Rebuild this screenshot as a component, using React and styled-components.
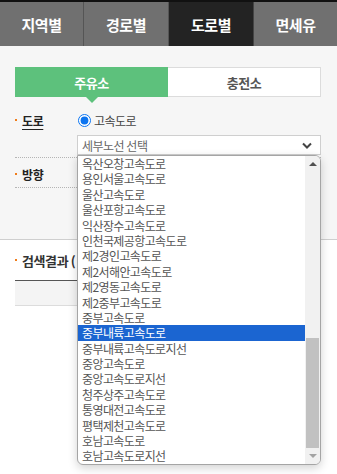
import React from "react";
import styled, { createGlobalStyle } from "styled-components";

const GlobalStyle = createGlobalStyle`
  body {
    margin: 0;
    background: #ffffff;
    font-family: "Noto Sans CJK KR", "Noto Sans", sans-serif;
  }
`;

const Page = styled.div`
  position: relative;
  width: 337px;
  height: 474px;
  overflow: hidden;
  background: #ffffff;
`;

const TabBar = styled.nav`
  display: grid;
  grid-template-columns: 84px 85px 85px 83px;
  height: 44px;
  border-top: 2px solid #111;
  background-color: #707070;
`;

const Tab = styled.div`
  display: flex;
  align-items: center;
  justify-content: center;
  color: #fff;
  font-size: 15px;
  font-weight: bold;
  letter-spacing: -0.5px;
  background-color: ${(p) => (p.active ? "#232323" : "#707070")};
  border-right: 1px solid ${(p) => (p.active ? "#444" : "#555")};
  &:last-child {
    border-right: none;
  }
`;

const Search = styled.section`
  background-color: #f6f6f6;
  padding: 21px 16px 15px 15px;
  border-bottom: 1px solid #cfcfcf;
`;

const SubTabs = styled.div`
  display: grid;
  grid-template-columns: 1fr 1fr;
  height: 30px;
`;

const SubTab = styled.div`
  position: relative;
  display: flex;
  align-items: center;
  justify-content: center;
  font-size: 13px;
  font-weight: bold;
  letter-spacing: -0.5px;
  color: ${(p) => (p.active ? "#fff" : "#555")};
  background-color: ${(p) => (p.active ? "#5dc17c" : "#fff")};
  border: 1px solid ${(p) => (p.active ? "#5dc17c" : "#dcdcdc")};
  border-left: ${(p) => (p.active ? "" : "none")};
  ${(p) =>
    p.active &&
    `&::after {
      content: "";
      position: absolute;
      left: 50%;
      bottom: -7px;
      margin-left: -6px;
      border-left: 6px solid transparent;
      border-right: 6px solid transparent;
      border-top: 6px solid #5dc17c;
    }`}
`;

const Field = styled.div`
  display: flex;
  padding: ${(p) => p.pad};
  border-bottom: 1px dotted #b5b5b5;
`;

const Label = styled.div`
  width: 62px;
  flex-shrink: 0;
  display: flex;
  align-items: center;
  gap: 5px;
  height: 18px;
  margin-top: ${(p) => p.top || "0"};
  font-size: 12px;
  font-weight: bold;
  color: #222;
  letter-spacing: -0.4px;
  &::before {
    content: "";
    width: 2px;
    height: 2px;
    background-color: #f07c1a;
  }
  span {
    text-decoration: ${(p) => (p.underline ? "underline" : "none")};
    text-underline-offset: 3px;
  }
`;

const Controls = styled.div`
  flex: 1;
  display: flex;
  flex-direction: column;
  gap: 6px;
`;

const RadioLine = styled.label`
  display: flex;
  align-items: center;
  gap: 3px;
  height: 18px;
  font-size: 12px;
  color: #444;
  letter-spacing: -0.5px;
  input {
    margin: 0 0 0 1px;
    width: 13px;
    height: 13px;
    accent-color: #0b74f0;
  }
`;

const SelectBox = styled.div`
  display: flex;
  align-items: center;
  justify-content: space-between;
  height: 20px;
  box-sizing: border-box;
  padding: 0 8px 0 4px;
  background-color: #fff;
  border: 1px solid #cfcfcf;
  font-size: 12px;
  color: #666;
  letter-spacing: -0.5px;
`;

const ButtonRow = styled.div`
  display: flex;
  justify-content: flex-end;
  margin-top: 10px;
`;

const SearchButton = styled.div`
  width: 80px;
  height: 26px;
  background-color: #3f9e5c;
`;

const Result = styled.section`
  padding: 0 16px 0 15px;
`;

const ResultTitle = styled.div`
  display: flex;
  align-items: center;
  height: 40px;
  font-size: 13px;
  font-weight: bold;
  color: #333;
  letter-spacing: -0.4px;
  gap: 5px;
  &::before {
    content: "";
    width: 2px;
    height: 2px;
    background-color: #f07c1a;
  }
`;

const TableHead = styled.div`
  height: 24px;
  background-color: #f4f4f4;
  border-top: 1px solid #555;
  border-bottom: 1px solid #dcdcdc;
`;

const Dropdown = styled.div`
  position: absolute;
  left: 77px;
  top: 155px;
  width: 244px;
  height: 310px;
  box-sizing: border-box;
  display: flex;
  background-color: #fff;
  border: 1px solid #a5a5a5;
  border-radius: 0 6px 6px 6px;
  box-shadow: 0 3px 10px rgba(0, 0, 0, 0.18);
  overflow: hidden;
`;

const List = styled.ul`
  flex: 1;
  margin: 0;
  padding: 0;
  list-style: none;
`;

const Item = styled.li`
  height: 15.4px;
  line-height: 15.4px;
  padding-left: 4px;
  font-size: 12px;
  letter-spacing: -0.6px;
  white-space: nowrap;
  color: ${(p) => (p.selected ? "#fff" : "#555")};
  background-color: ${(p) => (p.selected ? "#1b65d1" : "transparent")};
`;

const ScrollBar = styled.div`
  width: 15px;
  display: flex;
  flex-direction: column;
  align-items: center;
  background-color: #f1f1f1;
`;

const Arrow = styled.div`
  width: 0;
  height: 0;
  margin: 6px 0;
  border-left: 4px solid transparent;
  border-right: 4px solid transparent;
  ${(p) =>
    p.down
      ? `border-top: 4px solid #a3a3a3;`
      : `border-bottom: 4px solid #505050;`}
`;

const Track = styled.div`
  flex: 1;
  width: 13px;
  display: flex;
  flex-direction: column;
  justify-content: flex-end;
`;

const Thumb = styled.div`
  height: 110px;
  background-color: #c1c1c1;
`;

const roads = [
  "옥산오창고속도로",
  "용인서울고속도로",
  "울산고속도로",
  "울산포항고속도로",
  "익산장수고속도로",
  "인천국제공항고속도로",
  "제2경인고속도로",
  "제2서해안고속도로",
  "제2영동고속도로",
  "제2중부고속도로",
  "중부고속도로",
  "중부내륙고속도로",
  "중부내륙고속도로지선",
  "중앙고속도로",
  "중앙고속도로지선",
  "청주상주고속도로",
  "통영대전고속도로",
  "평택제천고속도로",
  "호남고속도로",
  "호남고속도로지선",
];

function Chevron() {
  return (
    <svg width="10" height="7" viewBox="0 0 10 7">
      <path d="M1 1.5 L5 5.5 L9 1.5" fill="none" stroke="#444" strokeWidth="2" />
    </svg>
  );
}

export default function App() {
  return (
    <Page>
      <GlobalStyle />
      <TabBar>
        <Tab>지역별</Tab>
        <Tab>경로별</Tab>
        <Tab active>도로별</Tab>
        <Tab>면세유</Tab>
      </TabBar>

      <Search>
        <SubTabs>
          <SubTab active>주유소</SubTab>
          <SubTab>충전소</SubTab>
        </SubTabs>

        <Field pad="14px 0 2px">
          <Label underline>
            <span>도로</span>
          </Label>
          <Controls>
            <RadioLine>
              <input type="radio" checked readOnly />
              고속도로
            </RadioLine>
            <SelectBox>
              세부노선 선택
              <Chevron />
            </SelectBox>
          </Controls>
        </Field>

        <Field pad="4px 0 4px">
          <Label top="3px">
            <span>방향</span>
          </Label>
          <Controls>
            <SelectBox />
          </Controls>
        </Field>

        <ButtonRow>
          <SearchButton />
        </ButtonRow>
      </Search>

      <Result>
        <ResultTitle>검색결과 (</ResultTitle>
        <TableHead />
      </Result>

      <Dropdown>
        <List>
          {roads.map((r) => (
            <Item key={r} selected={r === "중부내륙고속도로"}>
              {r}
            </Item>
          ))}
        </List>
        <ScrollBar>
          <Arrow />
          <Track>
            <Thumb />
          </Track>
          <Arrow down />
        </ScrollBar>
      </Dropdown>
    </Page>
  );
}
